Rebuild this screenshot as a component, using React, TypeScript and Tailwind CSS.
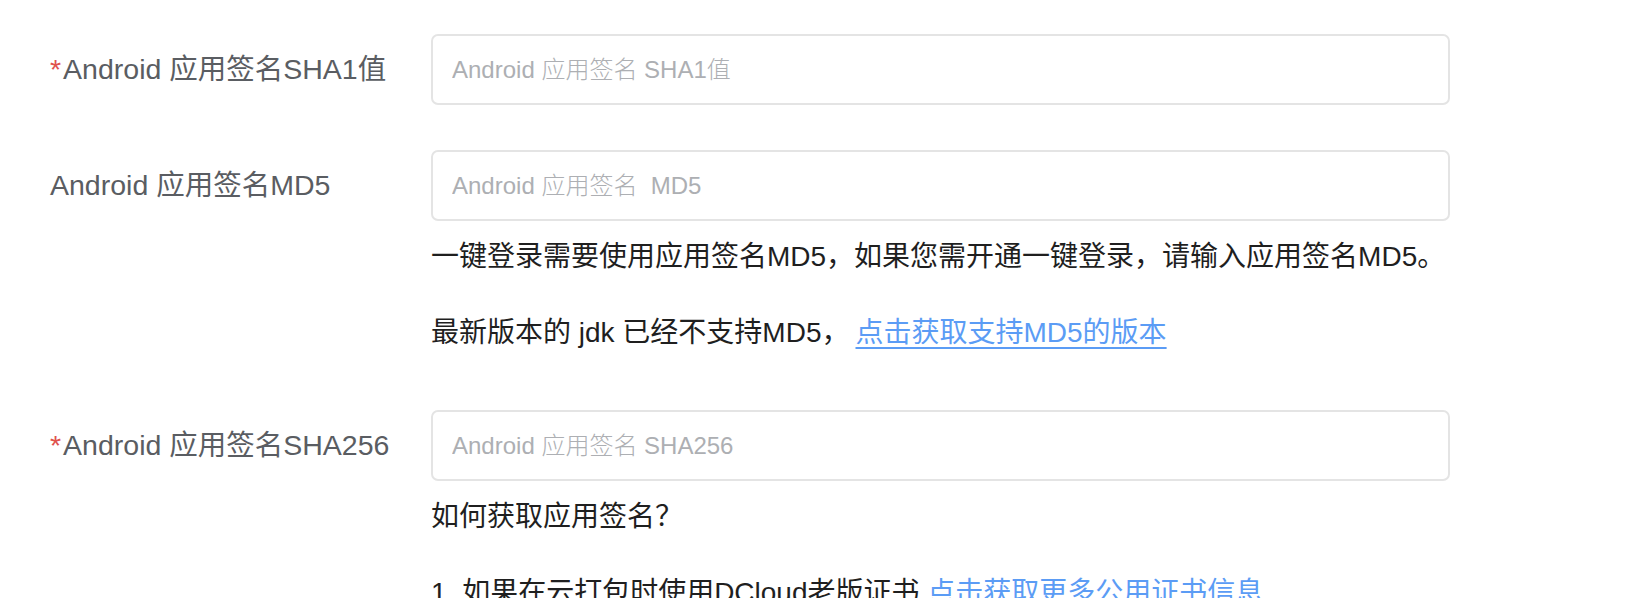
import React from "react";

const FONT = { fontFamily: '"Liberation Sans", "Noto Sans CJK SC", sans-serif' };

function Label({ text, required }: { text: string; required?: boolean }) {
  return (
    <div className="w-[381px] h-[71px] flex items-center shrink-0 text-[28.5px] text-[#5a5d62]">
      {required && <span className="text-[#e0524c] mr-[2px]">*</span>}
      <span>{text}</span>
    </div>
  );
}

function Field({ placeholder }: { placeholder: string }) {
  return (
    <input
      readOnly
      placeholder={placeholder}
      className="w-[1019px] h-[71px] border-2 border-[#e4e4e4] rounded-[7px] pl-[19px] text-[24px] font-light outline-none bg-white placeholder:text-[#adafb3]"
      style={FONT}
    />
  );
}

export default function App() {
  return (
    <div className="w-[1648px] h-[598px] overflow-hidden bg-white pl-[50px] pt-[34px]" style={FONT}>
      <div className="flex items-center">
        <Label text="Android 应用签名SHA1值" required />
        <Field placeholder="Android 应用签名 SHA1值" />
      </div>

      <div className="flex items-start mt-[45px]">
        <Label text="Android 应用签名MD5" />
        <div className="flex flex-col">
          <Field placeholder="Android 应用签名  MD5" />
          <p className="mt-[16px] leading-[40px] text-[28px] text-[#1f1f1f] whitespace-nowrap">
            一键登录需要使用应用签名MD5，如果您需开通一键登录，请输入应用签名MD5。
          </p>
          <p className="mt-[36px] leading-[40px] text-[28px] text-[#1f1f1f] whitespace-nowrap">
            最新版本的 jdk 已经不支持MD5，
            <a className="ml-[6px] text-[#5b9cf5] underline underline-offset-[5px] decoration-2">点击获取支持MD5的版本</a>
          </p>
        </div>
      </div>

      <div className="flex items-start mt-[57px]">
        <Label text="Android 应用签名SHA256" required />
        <div className="flex flex-col">
          <Field placeholder="Android 应用签名 SHA256" />
          <p className="mt-[16px] leading-[40px] text-[28px] text-[#1f1f1f] whitespace-nowrap">如何获取应用签名？</p>
          <p className="mt-[36px] leading-[40px] text-[28px] text-[#1f1f1f] whitespace-nowrap">
            1. 如果在云打包时使用DCloud老版证书,<a className="text-[#5b9cf5]">点击获取更多公用证书信息</a>
          </p>
        </div>
      </div>
    </div>
  );
}
